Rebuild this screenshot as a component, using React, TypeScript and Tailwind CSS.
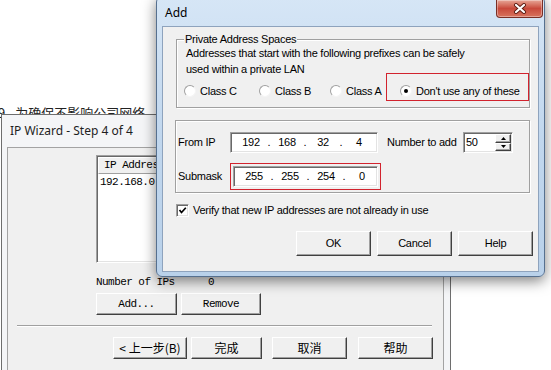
import type { ReactNode } from "react";

const sans = "font-['Liberation_Sans',Arial,sans-serif] text-[11px] tracking-[-0.25px]";
const mono = "font-['Liberation_Mono','Courier_New',monospace] text-[11px] tracking-[-0.55px]";
const cjk = "font-['Noto_Sans_CJK_SC',sans-serif] text-[12px]";
const ui = "font-['Noto_Sans','Open_Sans',sans-serif] text-[12px]";

function Btn({ children, className = "" }: { children: ReactNode; className?: string }) {
  return (
    <div
      className={`flex items-center justify-center bg-[#f0f0f0] border border-t-white border-l-white border-r-[#404040] border-b-[#404040] shadow-[inset_-1px_-1px_0_#a0a0a0] text-black ${className}`}
    >
      {children}
    </div>
  );
}

function Sunken({ children, className = "" }: { children?: ReactNode; className?: string }) {
  return (
    <div
      className={`bg-white border border-t-[#a0a0a0] border-l-[#a0a0a0] border-b-white border-r-white shadow-[inset_1px_1px_0_#696969,inset_-1px_-1px_0_#e3e3e3] ${className}`}
    >
      {children}
    </div>
  );
}

function Radio({ label, checked = false, className = "" }: { label: string; checked?: boolean; className?: string }) {
  return (
    <div className={`flex items-center h-[16px] ${className}`}>
      <div className="w-[12px] h-[12px] rounded-full bg-white border border-t-[#a0a0a0] border-l-[#a0a0a0] border-r-[#f4f4f4] border-b-[#f4f4f4] flex items-center justify-center">
        {checked && <div className="w-[4px] h-[4px] rounded-full bg-black" />}
      </div>
      <span className="ml-[4px]">{label}</span>
    </div>
  );
}

function IpField({ parts, className = "" }: { parts: string[]; className?: string }) {
  return (
    <Sunken className={`flex items-center h-[21px] ${className}`}>
      <div className="flex items-center pl-[5px]">
        {parts.map((p, i) => (
          <div key={i} className="flex items-center">
            <span className="w-[30px] text-center">{p}</span>
            {i < 3 && <span className="w-[6px] text-center">.</span>}
          </div>
        ))}
      </div>
    </Sunken>
  );
}

function Wizard() {
  return (
    <div className="absolute left-[1px] top-[114px] w-[450px] h-[300px] border border-[#6e6e6e] bg-[#f4f5f7] px-[5px] flex flex-col">
      <div className={`h-[32px] flex items-center pl-[3px] text-[#1e1e1e] ${ui} text-[12.5px]`}>IP Wizard - Step 4 of 4</div>
      <div className="w-[437px] flex-1 border border-[#a3a3a3] bg-[#f0f0f0] flex flex-col">
        <Sunken className="ml-[88px] mt-[7px] w-[200px] h-[108px] flex flex-col">
          <div className={`h-[17px] mx-[1px] mt-[1px] flex items-center border border-t-white border-l-white border-r-[#a0a0a0] border-b-[#a0a0a0] bg-[#f0f0f0] pl-[5px] ${mono}`}>
            IP Address
          </div>
          <div className={`pl-[3px] mt-[1px] h-[15px] flex items-center ${mono}`}>192.168.0.1</div>
        </Sunken>
        <div className={`ml-[88px] mt-[11px] h-[16px] flex items-center ${mono}`}>
          <span className="w-[112px]">Number of IPs</span>
          <span>0</span>
        </div>
        <div className={`ml-[88px] mt-[3px] flex gap-[4px] ${mono}`}>
          <Btn className="w-[81px] h-[22px]">Add...</Btn>
          <Btn className="w-[80px] h-[22px]">Remove</Btn>
        </div>
        <div className="ml-[9px] mt-[10px] w-[415px] border-t border-t-[#a0a0a0] border-b border-b-white" />
        <div className={`ml-[105px] mt-[10px] flex ${cjk}`}>
          <Btn className="w-[74px] h-[22px]">&lt;&nbsp;上一步(B)</Btn>
          <Btn className="w-[71px] h-[22px] ml-[4px]">完成</Btn>
          <Btn className="w-[75px] h-[22px] ml-[10px]">取消</Btn>
          <Btn className="w-[75px] h-[22px] ml-[11px]">帮助</Btn>
        </div>
      </div>
    </div>
  );
}

function CloseButton() {
  return (
    <div className="absolute left-[339px] top-[3px] w-[47px] h-[18px] rounded-b-[4px] border border-[#7a2f25] border-t-0 bg-linear-to-b from-[#e6a697] via-[#c8493b] to-[#d8735e] shadow-[inset_0_0_0_1px_rgba(255,255,255,0.35)] flex items-center justify-center">
      <svg width="14" height="11" viewBox="0 0 14 11">
        <path d="M3 2 L11 9 M11 2 L3 9" stroke="#5b1b12" strokeWidth="4" strokeLinecap="round" />
        <path d="M3 2 L11 9 M11 2 L3 9" stroke="#ffffff" strokeWidth="2.2" strokeLinecap="round" />
      </svg>
    </div>
  );
}

function AddDialog() {
  return (
    <div className="absolute left-[156px] top-[-4px] w-[389px] h-[281px] rounded-[6px] border border-[#56708f] bg-linear-to-b from-[#d6e6f6] via-[#c1d7ee] to-[#b9d1ea] shadow-[0_4px_14px_rgba(0,0,0,0.5)] px-[5px] flex flex-col">
      <CloseButton />
      <div className={`h-[29px] flex items-center pl-[3px] pt-[3px] text-black ${ui} text-[12.5px]`}>Add</div>
      <div className={`w-[377px] h-[246px] border border-[#8ea3bd] bg-[#f0f0f0] flex flex-col ${sans} text-black`}>
        {/* Private address spaces */}
        <div className="relative ml-[13px] mt-[12px] w-[354px] h-[69px] border border-[#a0a0a0] shadow-[inset_1px_1px_0_#ffffff,1px_1px_0_#ffffff]">
          <span className="absolute left-[7px] top-[-8px] px-[1px] bg-[#f0f0f0] leading-[14px]">Private Address Spaces</span>
          <div className="pl-[9px] pt-[5px] leading-[16px]">
            <div>Addresses that start with the following prefixes can be safely</div>
            <div>used within a private LAN</div>
          </div>
          <div className="flex ml-[7px] mt-[6px]">
            <Radio label="Class C" className="w-[75px]" />
            <Radio label="Class B" className="w-[71px]" />
            <Radio label="Class A" className="w-[70px]" />
            <Radio label="Don't use any of these" checked />
          </div>
          <div className="absolute left-[209px] top-[33px] w-[143px] h-[28px] border border-[#d2232e]" />
        </div>

        {/* From IP / submask */}
        <div className="ml-[12px] mt-[12px] w-[355px] h-[73px] border border-[#a0a0a0] shadow-[inset_1px_1px_0_#ffffff,1px_1px_0_#ffffff] flex flex-col">
          <div className="mt-[11px] flex items-center">
            <span className="w-[54px] pl-[2px]">From IP</span>
            <IpField parts={["192", "168", "32", "4"]} className="w-[148px]" />
            <span className="ml-[9px] w-[76px]">Number to add</span>
            <Sunken className="w-[50px] h-[21px] flex items-center">
              <span className="flex-1 pl-[2px]">50</span>
              <div className="w-[16px] h-[17px] mr-[1px] flex flex-col">
                <Btn className="h-[8.5px] w-full">
                  <svg width="5" height="3" viewBox="0 0 5 3"><path d="M2.5 0 L5 3 L0 3 Z" fill="#000" /></svg>
                </Btn>
                <Btn className="h-[8.5px] w-full">
                  <svg width="5" height="3" viewBox="0 0 5 3"><path d="M0 0 L5 0 L2.5 3 Z" fill="#000" /></svg>
                </Btn>
              </div>
            </Sunken>
          </div>
          <div className="mt-[10px] flex items-center">
            <span className="w-[54px] pl-[2px]">Submask</span>
            <div className="border border-[#d2232e] p-[2px]">
              <IpField parts={["255", "255", "254", "0"]} className="w-[145px]" />
            </div>
          </div>
        </div>

        <div className="ml-[13px] mt-[11px] flex items-center h-[13px]">
          <Sunken className="w-[13px] h-[13px] flex items-center justify-center">
            <svg width="9" height="9" viewBox="0 0 9 9">
              <path d="M1.5 4 L3.5 6.5 L7.8 1.8" stroke="#000" strokeWidth="1.7" fill="none" />
            </svg>
          </Sunken>
          <span className="ml-[4px]">Verify that new IP addresses are not already in use</span>
        </div>

        <div className="mt-[14px] flex justify-end gap-[6px] pr-[5px]">
          <Btn className="w-[75px] h-[25px]">OK</Btn>
          <Btn className="w-[75px] h-[25px]">Cancel</Btn>
          <Btn className="w-[75px] h-[25px]">Help</Btn>
        </div>
      </div>
    </div>
  );
}

export default function App() {
  return (
    <div className="relative w-[551px] h-[370px] overflow-hidden bg-white">
      <div className={`absolute left-[-2px] top-[103px] flex items-center gap-[10px] text-[#222] ${cjk} text-[13px]`}>
        <span>9</span>
        <span>为确保不影响公司网络</span>
      </div>
      <Wizard />
      <AddDialog />
    </div>
  );
}
